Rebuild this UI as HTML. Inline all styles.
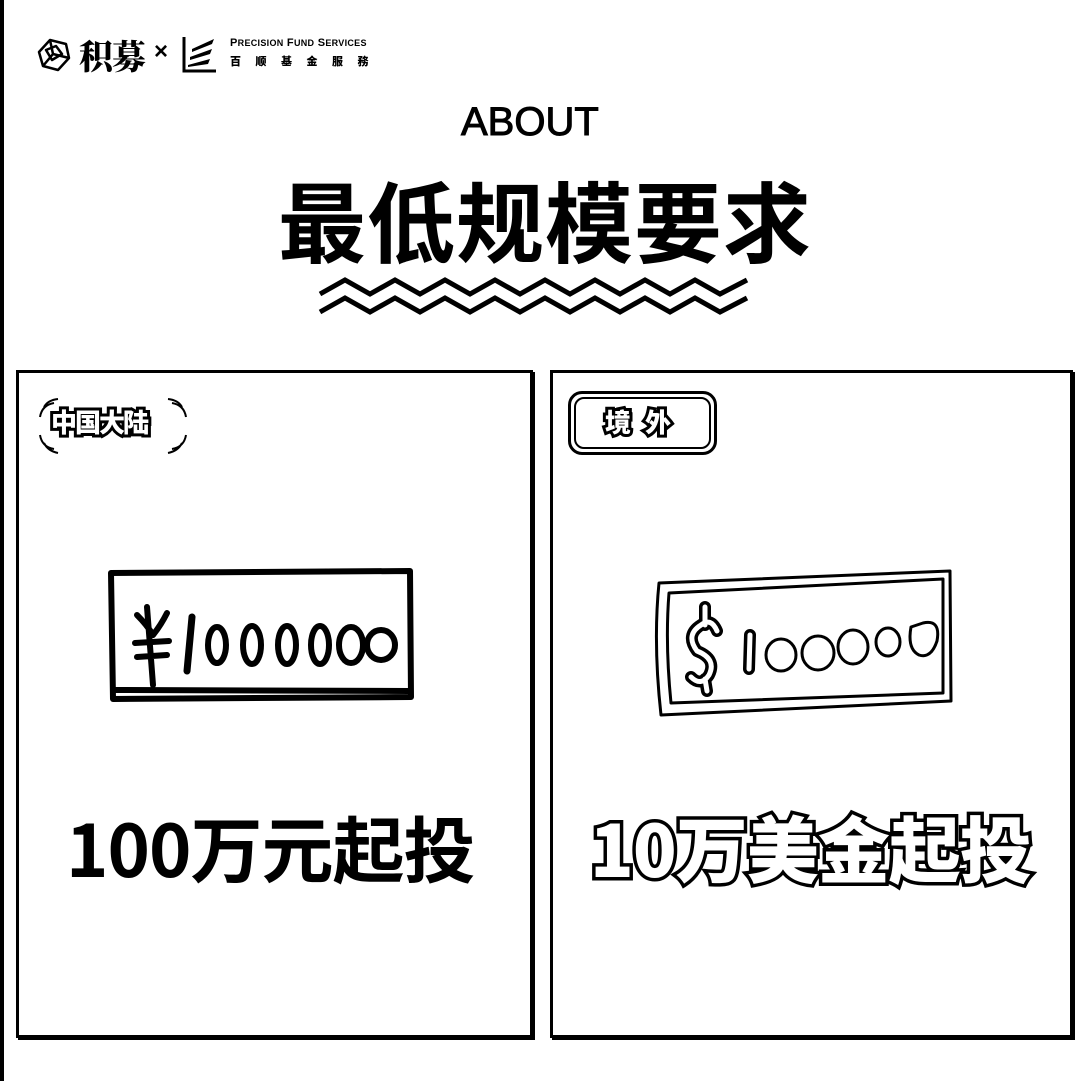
<!DOCTYPE html>
<html><head><meta charset="utf-8"><style>
*{margin:0;padding:0;box-sizing:border-box}
body{width:1080px;height:1081px;background:#fff;position:relative;overflow:hidden;font-family:"Liberation Sans","Noto Sans CJK SC",sans-serif;color:#000}
.a{position:absolute;white-space:nowrap}
.cj{font-family:"Noto Sans CJK SC","WenQuanYi Zen Hei",sans-serif;font-weight:900}
.panel{position:absolute;border:3px solid #000;box-shadow:2px 2px 0 #000}
</style></head><body>
<div class="a" style="left:0;top:0;width:4px;height:1081px;background:#000"></div>

<svg class="a" style="left:36px;top:34px" width="36" height="40" viewBox="0 0 36 40" fill="none" stroke="#000" stroke-width="2.5" stroke-linejoin="round">
<path d="M3 18 L14 6 L30 10 L33 24 L22 36 L7 32 Z"/><path d="M14 6 L17 20 L33 24 M17 20 L7 32 M10 16 L20 12 L26 20 L16 26 Z"/></svg>
<div class="a" style="left:79px;top:30px;font-size:34px;font-family:'Noto Serif CJK SC',serif;font-weight:900;letter-spacing:-1px">积募</div>
<div class="a" style="left:154px;top:38px;font-size:24px;font-weight:bold">×</div>
<svg class="a" style="left:182px;top:35px" width="38" height="38" viewBox="0 0 38 38">
<path d="M2 2 V36 H34" fill="none" stroke="#000" stroke-width="3"/>
<path d="M10 14 L32 4 L30 9 L10 17Z M8 22 L30 14 L28 19 L8 25Z M6 30 L28 24 L26 29 L6 32Z" fill="#000"/></svg>
<div class="a" style="left:230px;top:37px;font-size:11px;font-weight:bold;letter-spacing:0.3px">P<span style="font-size:9px">RECISION</span> F<span style="font-size:9px">UND</span> S<span style="font-size:9px">ERVICES</span></div>
<div class="a cj" style="left:230px;top:53px;font-size:11px;letter-spacing:14.5px">百顺基金服務</div>

<div class="a" style="left:461px;top:100px;font-size:40px;-webkit-text-stroke:1px #000">ABOUT</div>
<div class="a cj" style="left:278px;top:164px;font-size:88px;line-height:110px;letter-spacing:1px;font-weight:700">最低规模要求</div>

<svg class="a" style="left:315px;top:270px" width="440" height="50" viewBox="0 0 440 50" fill="none" stroke="#000" stroke-width="5" stroke-linejoin="miter">
<polyline points="5,24 30,10 55,24 80,10 105,24 130,10 155,24 180,10 205,24 230,10 255,24 280,10 305,24 330,10 355,24 380,10 405,24 432,10"/>
<polyline points="5,42 30,28 55,42 80,28 105,42 130,28 155,42 180,28 205,42 230,28 255,42 280,28 305,42 330,28 355,42 380,28 405,42 432,28"/>
</svg>

<div class="panel" style="left:16px;top:370px;width:517px;height:668px"></div>
<div class="panel" style="left:550px;top:370px;width:523px;height:668px"></div>

<svg class="a" style="left:36px;top:395px" width="154" height="62" viewBox="0 0 154 62" fill="none" stroke="#000" stroke-width="2">
<path d="M18 8 Q6 10 4 22 M22 4 Q12 5 8 12"/><path d="M136 8 Q148 10 150 22 M132 4 Q142 5 146 12"/>
<path d="M4 40 Q6 52 18 54 M8 48 Q12 56 22 58"/><path d="M150 40 Q148 52 136 54 M146 48 Q142 56 132 58"/></svg>
<div class="a cj" style="left:51px;top:406px;font-size:26px;line-height:32px;color:#fff;-webkit-text-stroke:6px #000;paint-order:stroke fill;letter-spacing:-2px">中国大陆</div>

<div class="a" style="left:568px;top:391px;width:149px;height:64px;border:3px solid #000;border-radius:14px"></div>
<div class="a" style="left:574px;top:397px;width:137px;height:52px;border:2px solid #000;border-radius:10px"></div>
<div class="a cj" style="left:605px;top:406px;font-size:26px;line-height:32px;color:#fff;-webkit-text-stroke:6px #000;paint-order:stroke fill;letter-spacing:14px">境外</div>

<svg class="a" style="left:105px;top:565px" width="312" height="145" viewBox="0 0 312 145" fill="none" stroke="#000" stroke-linecap="round" stroke-linejoin="round">
<path d="M6 8 L305 6 L306 132 L8 134 Z M8 125 L304 126" stroke-width="6"/>
<path d="M42 42 L48 120 M32 50 Q42 60 48 70 Q56 60 62 48 M30 78 L64 76 M32 92 L62 90" stroke-width="6"/>
<path d="M87 52 L82 106" stroke-width="7"/>
<ellipse cx="112" cy="80" rx="9" ry="18" stroke-width="6"/>
<ellipse cx="147" cy="80" rx="9" ry="19" stroke-width="6"/>
<ellipse cx="182" cy="80" rx="9" ry="19" stroke-width="6"/>
<ellipse cx="215" cy="80" rx="9" ry="19" stroke-width="6"/>
<ellipse cx="246" cy="80" rx="12" ry="18" stroke-width="6"/>
<ellipse cx="276" cy="80" rx="14" ry="15" stroke-width="6"/>
</svg>

<svg class="a" style="left:645px;top:563px" width="315" height="158" viewBox="0 0 315 158" fill="none" stroke="#000" stroke-linecap="round" stroke-linejoin="round">
<path d="M14 20 L305 8 L306 138 L16 152 Q8 80 14 20 Z" stroke-width="3"/>
<path d="M24 30 L298 16 L298 130 L26 140 Q20 80 24 30 Z" stroke-width="3"/>
<path d="M72 68 Q66 54 56 62 Q40 72 52 88 Q72 96 64 112 Q56 124 46 114 M60 44 L60 62 M60 116 L62 128" stroke-width="12"/>
<path d="M72 68 Q66 54 56 62 Q40 72 52 88 Q72 96 64 112 Q56 124 46 114 M60 44 L60 62 M60 116 L62 128" stroke-width="5" stroke="#fff"/>
<path d="M105 72 L104 106" stroke-width="12"/><path d="M105 72 L104 106" stroke-width="5" stroke="#fff"/>
<ellipse cx="136" cy="92" rx="15" ry="16" stroke-width="3"/>
<ellipse cx="173" cy="90" rx="16" ry="17" stroke-width="3"/>
<ellipse cx="208" cy="84" rx="15" ry="17" stroke-width="3"/>
<ellipse cx="243" cy="79" rx="12" ry="14" stroke-width="3"/>
<path d="M278 60 Q296 56 292 78 Q286 96 274 92 Q262 86 266 64 Z" stroke-width="3"/>
</svg>

<div class="a cj" style="left:66px;top:796px;font-size:72px;line-height:100px;letter-spacing:-1px;font-weight:700">100万元起投</div>
<div class="a cj" style="left:590px;top:796px;font-size:72px;line-height:100px;letter-spacing:-1px;color:#fff;-webkit-text-stroke:7px #000;paint-order:stroke fill">10万美金起投</div>
</body></html>
